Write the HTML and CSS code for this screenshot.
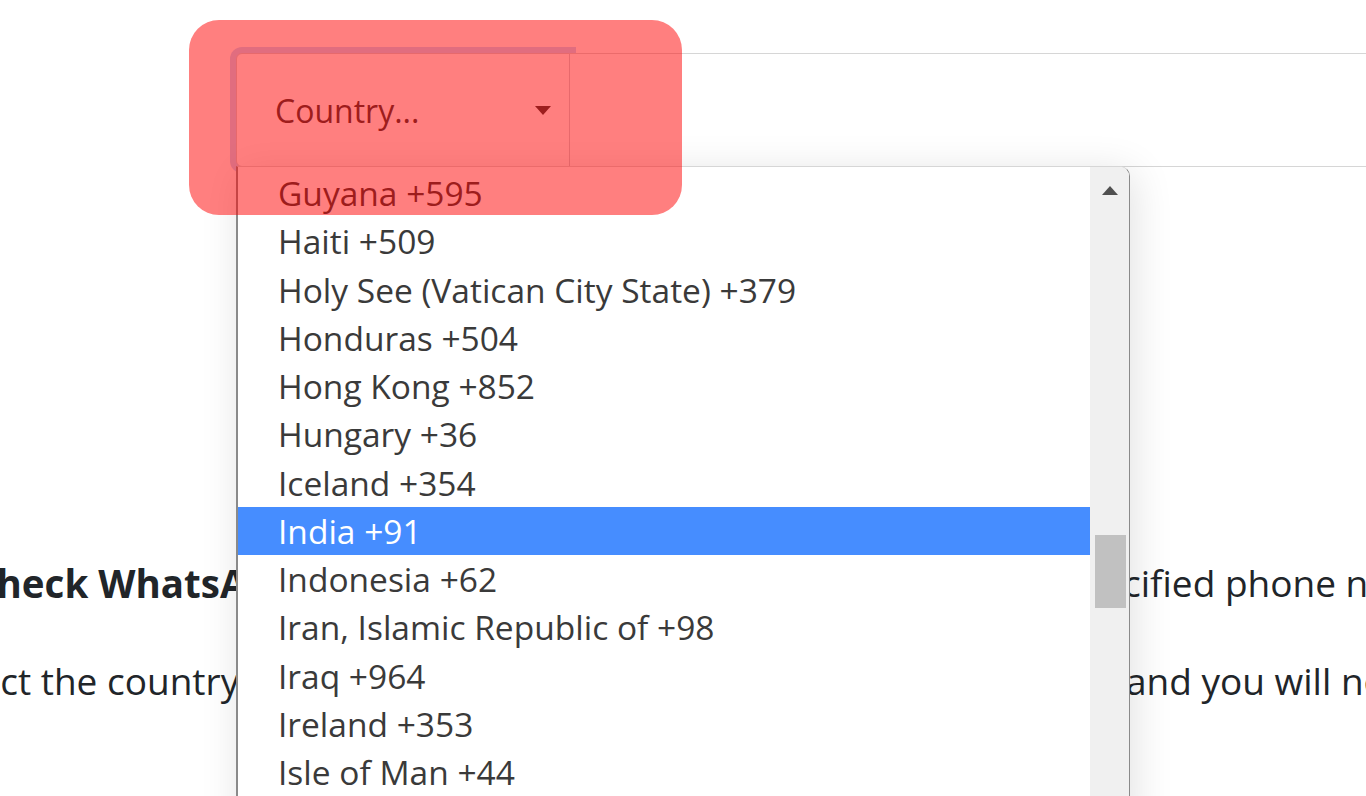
FILE: index.html
```html
<html>
  <head>
    <title>WhatsApp Checker</title>
    <meta charset="utf-8" />
    <meta name="viewport" content="width=device-width, initial-scale=1" />
    <link rel="stylesheet" href="styles.css">
  </head>
  <body>
    <div class="page">
      <div class="input-group">
        <div class="country-select">
          <span>Country...</span>
          <svg class="caret" width="16" height="9" viewBox="0 0 16 9"><path d="M0 0h16L8 9z" fill="#3a3a3a"/></svg>
        </div>
        <input type="text" class="phone" name="phone" />
      </div>

      <div class="intro">
        <p class="line line-one">
          <span class="lead"><b>Check WhatsApp</b> status: this little tool tells you if WhatsApp is active on the spe</span><span>cified phone number.</span>
        </p>
        <p class="line line-two">
          <span class="lead">Select the country code, type the phone number </span><span>and you will now see the result.</span>
        </p>
      </div>

      <div class="dropdown">
        <ul class="options">
          <li>Guyana +595</li>
          <li>Haiti +509</li>
          <li>Holy See (Vatican City State) +379</li>
          <li>Honduras +504</li>
          <li>Hong Kong +852</li>
          <li>Hungary +36</li>
          <li>Iceland +354</li>
          <li class="active">India +91</li>
          <li>Indonesia +62</li>
          <li>Iran, Islamic Republic of +98</li>
          <li>Iraq +964</li>
          <li>Ireland +353</li>
          <li>Isle of Man +44</li>
          <li>Israel +972</li>
        </ul>
        <div class="scrollbar">
          <svg class="arrow-up" width="16" height="9" viewBox="0 0 16 9"><path d="M8 0l8 9H0z" fill="#505050"/></svg>
          <div class="thumb"></div>
        </div>
      </div>

      <div class="highlight"></div>
    </div>
  </body>
</html>
```

FILE: styles.css
```css
body {
  margin: 0;
  width: 1366px;
  height: 796px;
  overflow: hidden;
  background: #fff;
  font-family: "Open Sans", "Noto Sans", sans-serif;
  color: #212529;
}

.page {
  position: relative;
  height: 796px;
  padding-top: 53px;
  box-sizing: border-box;
  overflow: hidden;
}

.input-group {
  display: flex;
  margin: 0 -30px 0 236px;
  height: 114px;
}

.country-select {
  position: relative;
  width: 334px;
  box-sizing: border-box;
  display: flex;
  align-items: center;
  justify-content: space-between;
  padding: 0 18px 0 38px;
  border: 1px solid #cfd3d8;
  border-radius: 6px 0 0 6px;
  box-shadow: 0 0 0 6px rgba(13, 110, 253, 0.25);
  font-size: 32px;
  color: #3b3b3b;
  background: #fff;
}

.phone {
  position: relative;
  flex: 1;
  border: 1px solid #d6d6d6;
  border-left: none;
  background: #fff;
  outline: none;
  margin: 0;
}

.intro {
  margin: 391px 0 0 -15px;
  font-size: 37px;
  line-height: 50px;
  white-space: nowrap;
}

.line {
  display: flex;
  margin: 0 0 47px;
}

.line .lead {
  overflow: hidden;
}

.line-one {
  margin-left: -13px;
}

.line-one b {
  font-size: 38.5px;
}

.line-one .lead {
  flex: 0 0 1151px;
}

.line-two {
  margin-left: -56px;
}

.line-two .lead {
  flex: 0 0 1197px;
}

.dropdown {
  position: absolute;
  left: 236px;
  top: 166px;
  width: 891px;
  height: 660px;
  display: flex;
  background: #fff;
  border: 1px solid #8a8a8a;
  border-left-width: 2px;
  border-top-color: #d6d6d6;
  border-radius: 0 10px 0 0;
  box-shadow: 4px 6px 40px rgba(0, 0, 0, 0.12);
  overflow: hidden;
}

.options {
  flex: 1;
  list-style: none;
  margin: 0;
  padding: 2px 0 0 0;
  font-size: 33.5px;
  color: #3a3a3a;
}

.options li {
  height: 48.25px;
  line-height: 48px;
  padding-left: 40px;
}

.options li.active {
  background: #468dff;
  color: #fff;
}

.scrollbar {
  position: relative;
  width: 39px;
  background: #f0f0f0;
}

.arrow-up {
  position: absolute;
  left: 12px;
  top: 19px;
}

.thumb {
  position: absolute;
  left: 5px;
  top: 368px;
  width: 31px;
  height: 73px;
  background: #c1c1c1;
}

.highlight {
  position: absolute;
  left: 189px;
  top: 20px;
  width: 493px;
  height: 195px;
  border-radius: 30px;
  background: rgba(255, 0, 0, 0.5);
}
```
